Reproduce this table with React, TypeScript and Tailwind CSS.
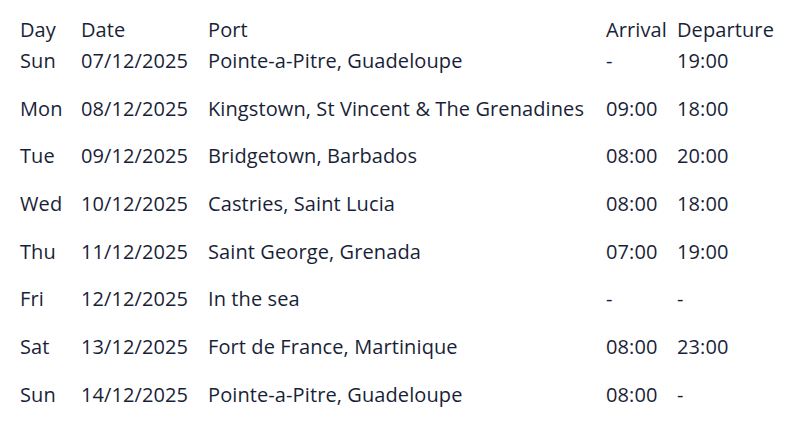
const rows = [
  { day: 'Sun', date: '07/12/2025', port: 'Pointe-a-Pitre, Guadeloupe', arr: '-', dep: '19:00' },
  { day: 'Mon', date: '08/12/2025', port: 'Kingstown, St Vincent & The Grenadines', arr: '09:00', dep: '18:00' },
  { day: 'Tue', date: '09/12/2025', port: 'Bridgetown, Barbados', arr: '08:00', dep: '20:00' },
  { day: 'Wed', date: '10/12/2025', port: 'Castries, Saint Lucia', arr: '08:00', dep: '18:00' },
  { day: 'Thu', date: '11/12/2025', port: 'Saint George, Grenada', arr: '07:00', dep: '19:00' },
  { day: 'Fri', date: '12/12/2025', port: 'In the sea', arr: '-', dep: '-' },
  { day: 'Sat', date: '13/12/2025', port: 'Fort de France, Martinique', arr: '08:00', dep: '23:00' },
  { day: 'Sun', date: '14/12/2025', port: 'Pointe-a-Pitre, Guadeloupe', arr: '08:00', dep: '-' },
];

const cols = 'grid grid-cols-[61px_127px_398px_71px_1fr]';

export default function App() {
  return (
    <div className="w-[800px] h-[432px] bg-white pl-[20px] pt-[17px] font-['Open_Sans',sans-serif] text-[20px] font-medium tracking-[0.1px] leading-[26px] text-[#1a1f38] overflow-hidden">
      <div className={`${cols} mb-[5px]`}>
        <div>Day</div>
        <div>Date</div>
        <div>Port</div>
        <div>Arrival</div>
        <div>Departure</div>
      </div>
      {rows.map((r, i) => (
        <div key={i} className={`${cols} h-[47.7px]`}>
          <div>{r.day}</div>
          <div>{r.date}</div>
          <div className="whitespace-nowrap">{r.port}</div>
          <div>{r.arr}</div>
          <div>{r.dep}</div>
        </div>
      ))}
    </div>
  );
}
